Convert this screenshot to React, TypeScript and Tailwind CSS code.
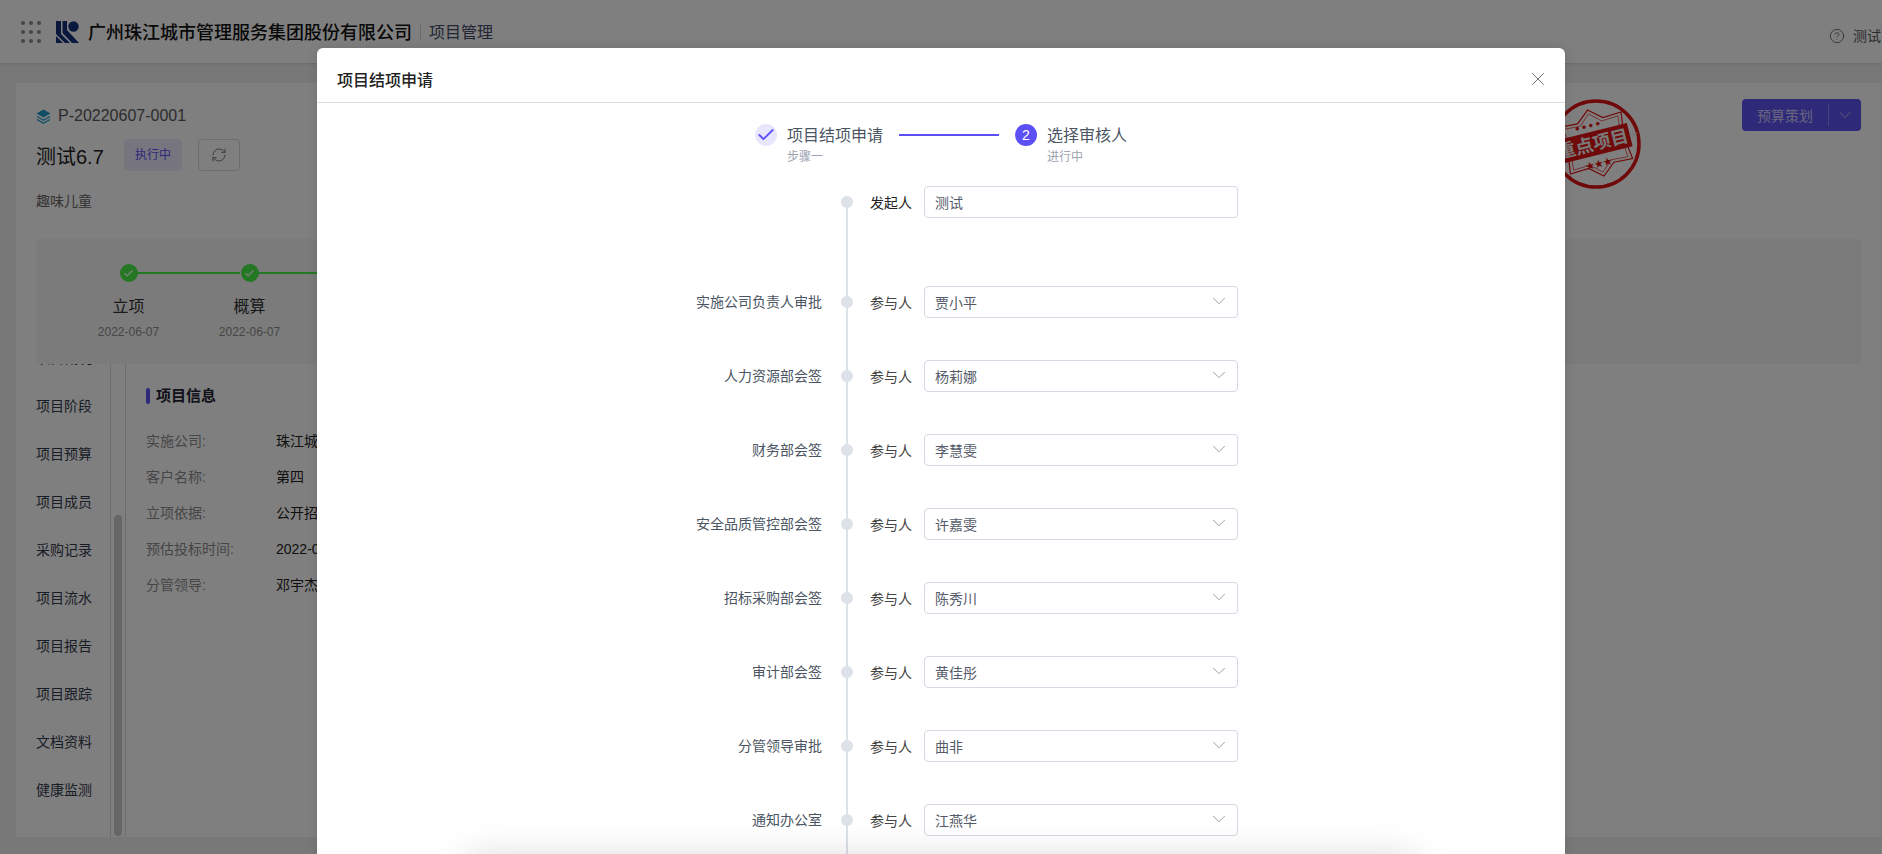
import { Check, ChevronDown, CircleHelp, RefreshCw, X } from "lucide-react";

const font = { fontFamily: '"Liberation Sans", "Noto Sans CJK SC", sans-serif' };

const sideItems = ["项目概况", "项目阶段", "项目预算", "项目成员", "采购记录", "项目流水", "项目报告", "项目跟踪", "文档资料", "健康监测"];
const infoRows: [string, string][] = [
  ["实施公司:", "珠江城市管理服务集团"],
  ["客户名称:", "第四"],
  ["立项依据:", "公开招标"],
  ["预估投标时间:", "2022-06-07"],
  ["分管领导:", "邓宇杰"],
];
const approvers: [string, string][] = [
  ["实施公司负责人审批", "贾小平"],
  ["人力资源部会签", "杨莉娜"],
  ["财务部会签", "李慧雯"],
  ["安全品质管控部会签", "许嘉雯"],
  ["招标采购部会签", "陈秀川"],
  ["审计部会签", "黄佳彤"],
  ["分管领导审批", "曲非"],
  ["通知办公室", "江燕华"],
];

function Logo() {
  return (
    <svg width="23" height="22" viewBox="0 0 23 22" className="shrink-0">
      <path d="M0 0H5V13L14 22H9L0 13z" fill="#14307c" />
      <path d="M0 15L7 22H0z" fill="#14307c" />
      <path d="M6.5 0H11V9L23 22H16L6.5 12z" fill="#14307c" />
      <circle cx="17.5" cy="5.5" r="5.2" fill="#14307c" />
    </svg>
  );
}

function Stamp() {
  const c = "#e01212";
  return (
    <svg width="92" height="92" viewBox="0 0 92 92" className="shrink-0">
      <circle cx="46" cy="46" r="43" fill="none" stroke={c} strokeWidth="3.5" />
      <g transform="rotate(-14 46 46)">
        <path d="M46 11l13 11 19-1-3 24 3 24-19-1-13 11-13-11-19 1 3-24-3-24 19 1z" fill="none" stroke={c} strokeWidth="1.2" />
        <path d="M46 15l11 10 17-1-2 21 2 21-17-1-11 10-11-10-17 1 2-21-2-21 17 1z" fill="none" stroke={c} strokeWidth="0.6" />
        <rect x="-4" y="33" width="85" height="24" fill={c} />
        <text x="43" y="51.5" textAnchor="middle" fontSize="18" fontWeight="700" fill="#f2f2f2" style={{ fontFamily: '"Noto Sans CJK SC", serif' }}>重点项目</text>
        <text x="85" y="49" textAnchor="middle" fontSize="9" fill="#f2f2f2">★</text>
        <text x="42" y="29" textAnchor="middle" fontSize="8" fill={c}>● ● ● ●</text>
        <text x="44" y="69" textAnchor="middle" fontSize="9" fill={c}>★★★</text>
      </g>
    </svg>
  );
}

function Layers() {
  return (
    <svg width="15" height="15" viewBox="0 0 15 15" className="shrink-0">
      <path d="M7.5 0.5L14.5 4.5 7.5 8.5 0.5 4.5z" fill="#1f9dc9" />
      <path d="M1 7.5l6.5 3.7L14 7.5M1 10.5l6.5 3.7L14 10.5" fill="none" stroke="#1f9dc9" strokeWidth="1.3" />
    </svg>
  );
}

function Background() {
  return (
    <div className="flex flex-col h-[854px] bg-[#f0f0f2]">
      <header className="h-[63px] shrink-0 bg-white flex items-center pl-[21px] pt-[1px] pr-[1px] shadow-sm">
        <div className="grid grid-cols-3 gap-x-[5px] gap-y-[5px] w-[19px] mr-[16px]">
          {Array.from({ length: 9 }).map((_, i) => (
            <span key={i} className="w-[4px] h-[4px] rounded-full bg-[#8c8c8c]" />
          ))}
        </div>
        <Logo />
        <span className="ml-[9px] pt-[2px] text-[18px] font-medium text-[#111]">广州珠江城市管理服务集团股份有限公司</span>
        <span className="w-px h-[16px] bg-[#d9d9d9] mx-[8px]" />
        <span className="pt-[2px] text-[16px] text-[#444b66]">项目管理</span>
        <div className="ml-auto mt-[8px] flex items-center gap-[8px] text-[14px] text-[#595959] whitespace-nowrap">
          <CircleHelp size={16} strokeWidth={1.2} />
          <span>测试</span>
        </div>
      </header>
      <main className="pt-[20px] pl-[16px] pr-[1px] flex-1 min-h-0 pb-[17px]">
        <div className="h-full bg-white flex flex-col">
          <section className="h-[156px] shrink-0 pl-[20px] pt-[17px] pr-[20px] flex justify-between">
            <div>
              <div className="flex items-center gap-[6px] h-[32px] text-[16px] text-[#595959]">
                <Layers />
                <span className="ml-[1px]">P-20220607-0001</span>
              </div>
              <div className="flex items-center mt-[7px] h-[32px]">
                <span className="text-[20px] pt-[3px] text-[#222] w-[88px]">测试6.7</span>
                <span className="w-[58px] h-[32px] rounded-[4px] bg-[#eeecff] text-[#5b4ff5] text-[12px] flex items-center justify-center">执行中</span>
                <span className="ml-[16px] w-[42px] h-[32px] rounded-[4px] border border-[#d9d9d9] flex items-center justify-center text-[#595959]">
                  <RefreshCw size={16} strokeWidth={1.2} />
                </span>
              </div>
              <div className="mt-[20px] text-[14px] text-[#666]">趣味儿童</div>
            </div>
            <div className="flex items-start -mt-px">
              <div className="w-[119px] h-[32px] rounded-[4px] bg-[#5e52f5] text-white flex items-center text-[14px]">
                <span className="flex-1 text-center pt-[2px] opacity-70">预算策划</span>
                <span className="w-px h-[22px] bg-white/30" />
                <span className="w-[32px] flex justify-center"><ChevronDown size={20} strokeWidth={1} className="opacity-70" /></span>
              </div>
            </div>
          </section>
          <section className="ml-[20px] mr-[20px] h-[125px] shrink-0 bg-[#f7f7f7] flex pt-[25px]">
            {[0, 1].map((i) => (
              <div key={i} className="w-[121px] first:ml-[32px] flex flex-col items-center relative">
                <span className="w-[18px] h-[18px] rounded-full bg-[#48f048] flex items-center justify-center text-white">
                  <Check size={11} strokeWidth={2.5} />
                </span>
                <span className="absolute left-[70px] top-[8px] w-[102px] h-[2px] bg-[#48f048]" />
                <span className="mt-[13px] text-[16px] leading-[24px] text-[#333]">{i === 0 ? "立项" : "概算"}</span>
                <span className="mt-[4px] text-[12px] text-[#8c8c8c]">2022-06-07</span>
              </div>
            ))}
          </section>
          <section className="flex-1 min-h-0 flex">
            <nav className="w-[95px] shrink-0 pl-[20px] overflow-hidden border-r border-[#d9d9d9]">
              <div className="mt-[-30px]">
                {sideItems.map((s) => (
                  <div key={s} className="h-[48px] flex items-center text-[14px] text-[#333a4d]">{s}</div>
                ))}
              </div>
            </nav>
            <div className="w-[15px] shrink-0 border-r border-[#d9d9d9] flex items-end pl-[3px] pb-[1px]">
              <div className="w-[8px] h-[321px] rounded-full bg-[#cccccc]" />
            </div>
            <div className="pl-[20px] pt-[24px] flex-1">
              <div className="flex items-center h-[16px]">
                <span className="w-[4px] h-[16px] bg-[#5e52f5] rounded-sm" />
                <span className="ml-[6px] text-[15px] font-semibold text-[#1f2233]">项目信息</span>
              </div>
              <div className="mt-[19px] flex flex-col">
                {infoRows.map(([a, b]) => (
                  <div key={a} className="h-[36px] flex items-center text-[14px]">
                    <span className="w-[130px] text-[#8c8c8c]">{a}</span>
                    <span className="text-[#222]">{b}</span>
                  </div>
                ))}
              </div>
            </div>
          </section>
        </div>
      </main>
    </div>
  );
}

function Row({ label, lead, value, select }: { label?: string; lead: string; value: string; select?: boolean }) {
  return (
    <div className="h-[32px] flex items-center relative">
      <span className="w-[505px] text-right text-[14px] text-[#4b5563] shrink-0">{label}</span>
      <span className="w-[12px] h-[12px] rounded-full bg-[#dde1e8] ml-[19px] shrink-0" />
      <span className={`ml-[17px] w-[54px] pt-[2px] shrink-0 text-[14px] ${select ? "text-[#444]" : "text-[#222]"}`}>{lead}</span>
      <div className="w-[314px] h-[32px] rounded-[4px] border border-[#d6d8e4] flex items-center justify-between pl-[10px] pr-[7px] text-[14px] text-[#555b6b]">
        <span className="pt-[2px]">{value}</span>
        {select && <ChevronDown size={22} strokeWidth={0.9} className="text-[#8c8c8c] -mt-[2px]" />}
      </div>
    </div>
  );
}

function Modal() {
  return (
    <div className="absolute left-[317px] top-[48px] w-[1248px] h-[806px] bg-white rounded-t-[6px] overflow-hidden">
      <div className="h-[55px] border-b border-[#dcdce4] flex items-center justify-between pt-[12px] pl-[20px] pr-[16px]">
        <span className="text-[16px] font-medium text-[#222]">项目结项申请</span>
        <X size={22} strokeWidth={1} className="text-[#666] -mt-[4px]" />
      </div>
      <div className="flex pl-[438px] pt-[21px] h-[83px]">
        <span className="w-[22px] h-[22px] rounded-full bg-[#e8e6fd] flex items-center justify-center text-[#5b4ff5] shrink-0">
          <Check size={20} strokeWidth={2.2} />
        </span>
        <div className="ml-[10px] w-[112px] shrink-0">
          <div className="text-[16px] leading-[24px] text-[#4b5563]">项目结项申请</div>
          <div className="text-[12px] leading-[18px] text-[#9ca3af]">步骤一</div>
        </div>
        <span className="w-[100px] h-[2px] bg-[#5b4ff5] mt-[10px] shrink-0" />
        <span className="ml-[16px] w-[22px] h-[22px] rounded-full bg-[#5b4ff5] text-white text-[14px] flex items-center justify-center shrink-0">2</span>
        <div className="ml-[10px]">
          <div className="text-[16px] leading-[24px] text-[#4b5563]">选择审核人</div>
          <div className="text-[12px] leading-[18px] text-[#9ca3af]">进行中</div>
        </div>
      </div>
      <div className="relative">
        <span className="absolute left-[529px] top-[10px] w-[2px] h-[700px] bg-[#dde1e8]" />
        <Row lead="发起人" value="测试" />
        <div className="mt-[68px] flex flex-col gap-[42px]">
          {approvers.map(([l, v]) => (
            <Row key={l} label={l} lead="参与人" value={v} select />
          ))}
        </div>
      </div>
      <div className="absolute left-[150px] right-[150px] top-[814px] h-[60px] bg-white shadow-[0_0_40px_rgba(0,0,0,0.2)]" />
    </div>
  );
}

export default function App() {
  return (
    <div className="relative w-[1882px] h-[854px] overflow-hidden bg-[#787878]" style={font}>
      <Background />
      <div className="absolute left-[1550px] top-[98px]"><Stamp /></div>
      <div className="absolute inset-0 bg-black/50" />
      <div className="absolute left-[317px] top-[48px] w-[1248px] h-[806px] rounded-t-[6px] shadow-[0_0_12px_rgba(0,0,0,0.12)]" />
      <Modal />
    </div>
  );
}
